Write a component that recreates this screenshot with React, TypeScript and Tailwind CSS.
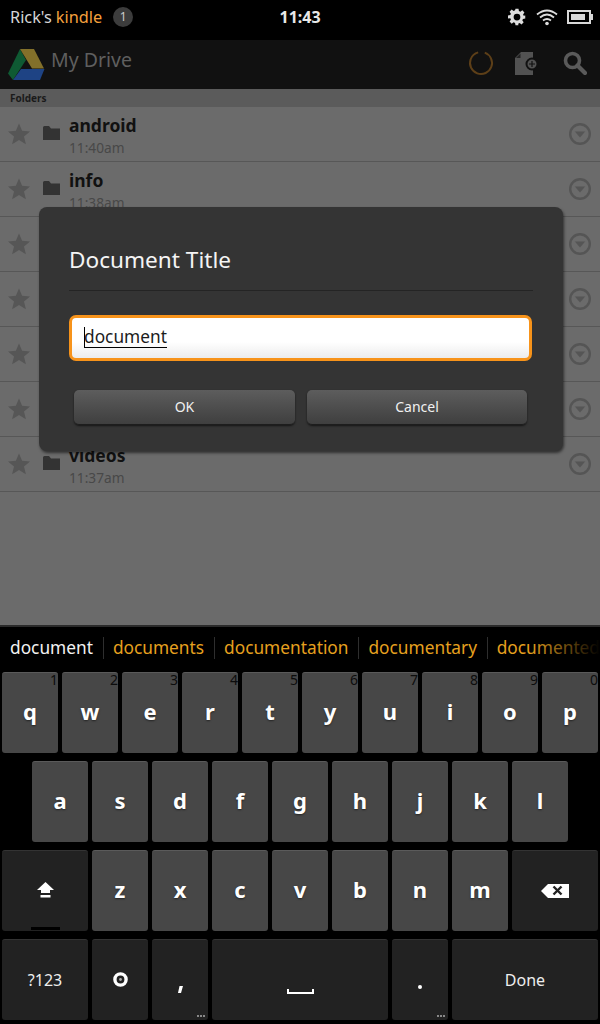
const font = { fontFamily: '"Noto Sans", "Open Sans", sans-serif' };

function Star() {
  return (
    <svg width="24" height="24" viewBox="0 0 24 24" className="shrink-0">
      <path d="M12 1.500l3.100 7.300 7.900.6-6 5.100 1.900 7.700L12 18.100l-6.900 4.100 1.900-7.700-6-5.100 7.900-.6z" fill="#565656" />
    </svg>
  );
}

function Folder() {
  return (
    <svg width="17" height="14" viewBox="0 0 17 14" className="shrink-0">
      <path d="M0 1.500Q0 0 1.500 0H6l2 2.500h9V14H0z" fill="#333333" />
    </svg>
  );
}

function RowArrow() {
  return (
    <svg width="24" height="24" viewBox="0 0 24 24" className="shrink-0">
      <circle cx="12" cy="12" r="9.800" fill="none" stroke="#555555" strokeWidth="2.400" />
      <path d="M6.800 9.500h10.400L12 15.500z" fill="#555555" />
    </svg>
  );
}

function FolderRow({ name, time }: { name?: string; time?: string }) {
  return (
    <div className="flex h-[55px] items-center border-b border-[#575757] pl-[7px] pr-[8px]">
      <Star />
      <div className="mb-[2px] ml-[12px]">
        <Folder />
      </div>
      <div className="ml-[9px] flex-1 pt-[3px]">
        <div className="h-[25px] text-[17.500px] leading-[25px] font-bold text-[#111111]">{name}</div>
        <div className="h-[20px] text-[13.700px] leading-[20px] text-[#484848]">{time}</div>
      </div>
      <RowArrow />
    </div>
  );
}

function StatusBar() {
  return (
    <div className="flex h-[40px] items-center bg-black pb-[6px] pl-[10px] pr-[7px]">
      <span className="text-[16.300px] text-[#d6d6d6]">Rick's</span>
      <span className="ml-[4px] text-[16.300px] text-[#f5a03c]">kindle</span>
      <span className="ml-[11px] flex h-[20px] w-[20px] items-center justify-center rounded-full bg-[#3c3c3c] text-[12px] text-[#cccccc]">1</span>
      <span className="flex-1 pr-[41px] text-center text-[16px] font-bold text-[#e8e8e8]">11:43</span>
      <svg width="18" height="18" viewBox="0 0 24 24" className="mr-[10px]">
        <path
          fillRule="evenodd"
          fill="#dddddd"
          d="M10 1h4l.6 3.100 1.900.8 2.600-1.800 2.800 2.800-1.800 2.600.8 1.900L23 10v4l-3.100.6-.8 1.900 1.800 2.600-2.800 2.800-2.600-1.800-1.900.8L13.900 23H10l-.6-3.100-1.900-.8-2.600 1.800-2.800-2.800 1.800-2.600-.8-1.900L0 14v-4l3.100-.6.800-1.900L2.100 4.900l2.800-2.800 2.600 1.800 1.900-.8zM12 7.500a4.500 4.500 0 1 0 0 9 4.500 4.500 0 0 0 0-9z"
        />
      </svg>
      <svg width="22" height="18" viewBox="0 0 22 18" className="mr-[9px]">
        <g fill="none" stroke="#dddddd" strokeWidth="1.800">
          <path d="M1 6.500Q11-1.500 21 6.500" />
          <path d="M4 9.500Q11 3.500 18 9.500" />
          <path d="M7 12.500Q11 9.500 15 12.500" />
        </g>
        <circle cx="11" cy="15.500" r="1.800" fill="#dddddd" />
      </svg>
      <div className="flex items-center">
        <div className="flex h-[14px] w-[24px] items-center border-2 border-[#d8d8d8] pl-[2px]">
          <div className="h-[6px] w-[14px] bg-[#d8d8d8]" />
        </div>
        <div className="h-[6px] w-[2px] bg-[#d8d8d8]" />
      </div>
    </div>
  );
}

function DriveLogo() {
  return (
    <svg width="38" height="33" viewBox="0 0 38 33">
      <path d="M13 1L1 25.500 6 32 19 12z" fill="#0f5a33" />
      <path d="M13 1h14l10 19.500H25z" fill="#83702a" />
      <path d="M14 21h23.500L33 32H6z" fill="#1e4384" />
    </svg>
  );
}

function AppHeader() {
  return (
    <div className="flex h-[49px] items-center bg-[#111111] pl-[7px] pr-[13px]">
      <DriveLogo />
      <span className="ml-[6px] flex-1 pb-[9px] text-[19.500px] text-[#5f5f5f]">My Drive</span>
      <svg width="26" height="26" viewBox="0 0 26 26" className="mb-[3px] mr-[20px]">
        <circle cx="13" cy="13" r="11" fill="none" stroke="#5d3f18" strokeWidth="2" strokeDasharray="62 7" transform="rotate(-70 13 13)" />
      </svg>
      <svg width="27" height="24" viewBox="0 0 27 24" className="mb-[3px] mr-[22px]">
        <path d="M7 1h12v23H1V7z" fill="#525252" />
        <path d="M6.500 2.500V7H2z" fill="#222222" />
        <circle cx="18" cy="13" r="5.500" fill="#525252" stroke="#111111" strokeWidth="2" />
        <path d="M15 13h6M18 10v6" stroke="#111111" strokeWidth="1.200" />
      </svg>
      <svg width="24" height="24" viewBox="0 0 24 24" className="mb-[3px]">
        <circle cx="9.500" cy="9.500" r="7" fill="none" stroke="#5a5a5a" strokeWidth="3.600" />
        <path d="M14.500 14.500L22 22" stroke="#5a5a5a" strokeWidth="4.200" strokeLinecap="round" />
      </svg>
    </div>
  );
}

function DialogButton({ label, w }: { label: string; w: string }) {
  return (
    <button className={`h-[35px] rounded-[5px] border-b border-[#1d1d1d] bg-gradient-to-b from-[#5d5d5d] to-[#3f3f3f] pb-[2px] text-[14px] text-[#f0f0f0] shadow-[0_1px_2px_rgba(0,0,0,0.6)] ${w}`}>
      {label}
    </button>
  );
}

function TitleDialog() {
  return (
    <div className="absolute left-[39px] top-[207px] h-[244px] w-[524px] rounded-[8px] bg-[#343434] px-[30px] pt-[35px] shadow-[1px_2px_3px_rgba(0,0,0,0.55)]">
      <div className="h-[49px] border-b border-[#242424] text-[22.600px] leading-[36px] text-[#f4f4f4]">Document Title</div>
      <div className="mt-[24px] flex h-[46px] w-[463px] items-center rounded-[7px] border-[3px] border-[#f7931a] bg-gradient-to-b from-white from-60% to-[#ececec] pl-[12px]">
        <span className="mb-[2px] border-b border-black text-[17.300px] leading-[20px] text-[#1c1c1c] shadow-[inset_1px_0_0_#000000]">document</span>
      </div>
      <div className="mt-[29px] flex gap-[12px] pl-[5px]">
        <DialogButton label="OK" w="w-[221px]" />
        <DialogButton label="Cancel" w="w-[220px]" />
      </div>
    </div>
  );
}

function Suggestions() {
  const words = ["documents", "documentation", "documentary"];
  return (
    <div className="relative flex h-[47px] items-center overflow-hidden border-t-2 border-[#2a2a2a] bg-black pb-[4px] pl-[10px] text-[17.300px] whitespace-nowrap">
      <span className="text-[#f2f2f2]">document</span>
      {words.map((w) => (
        <div key={w} className="flex items-center">
          <div className="ml-[10px] mr-[9px] h-[22px] w-px bg-[#2e2e2e]" />
          <span className="text-[#e6a01f]">{w}</span>
        </div>
      ))}
      <div className="ml-[10px] mr-[9px] h-[22px] w-px bg-[#2e2e2e]" />
      <span className="text-[#e6a01f]">documented</span>
      <div className="absolute right-0 top-0 h-full w-[70px] bg-gradient-to-r from-transparent to-black" />
    </div>
  );
}

function Key({ label, digit, dark, w = "w-[56px]", dots, children, thin }: {
  label?: string;
  digit?: string;
  dark?: boolean;
  w?: string;
  dots?: boolean;
  thin?: boolean;
  children?: React.ReactNode;
}) {
  return (
    <div
      className={`relative flex h-[81px] shrink-0 items-center justify-center rounded-[3px] border-t ${w} ${
        dark ? "border-[#333333] bg-[#222222]" : "border-[#5a5a5a] bg-[#474747]"
      }`}
    >
      {digit && <span className="absolute right-0 top-[-2px] text-[14px] leading-[18px] text-[#0c0c0c]">{digit}</span>}
      {label && (
        <span
          className={
            thin
              ? "text-[16px] text-[#eeeeee]"
              : "pb-[3px] text-[22px] font-bold text-white [text-shadow:0_1px_2px_rgba(0,0,0,0.5)]"
          }
        >
          {label}
        </span>
      )}
      {children}
      {dots && <span className="absolute bottom-[3px] right-[3px] h-[2px] w-[8px] bg-[linear-gradient(90deg,#888_2px,transparent_2px)] bg-[length:3px_2px]" />}
    </div>
  );
}

function Keyboard() {
  return (
    <div className="flex flex-1 flex-col gap-[8px] bg-black">
      <div className="flex gap-[4px] pl-[2px]">
        {"qwertyuiop".split("").map((c, i) => (
          <Key key={c} label={c} digit={String((i + 1) % 10)} />
        ))}
      </div>
      <div className="flex gap-[4px] pl-[32px]">
        {"asdfghjkl".split("").map((c) => (
          <Key key={c} label={c} />
        ))}
      </div>
      <div className="flex gap-[4px] pl-[2px]">
        <Key dark w="w-[86px]">
          <svg width="17" height="16" viewBox="0 0 17 16" className="mb-[3px]">
            <path d="M8.500 0L17 8h-4v3H4V8H0z" fill="#ffffff" />
            <rect x="3.500" y="13" width="10" height="2.500" fill="#ffffff" />
          </svg>
          <span className="absolute bottom-[1px] left-[29px] h-[3px] w-[29px] bg-black" />
        </Key>
        {"zxcvbnm".split("").map((c) => (
          <Key key={c} label={c} />
        ))}
        <Key dark w="w-[86px]">
          <svg width="28" height="14" viewBox="0 0 28 14" className="mb-[1px]">
            <path d="M7 0h21v14H7L0 7z" fill="#ffffff" />
            <path d="M12.500 2.500l8 8M20.500 2.500l-8 8" stroke="#222222" strokeWidth="2.400" />
          </svg>
        </Key>
      </div>
      <div className="flex gap-[4px] pl-[2px]">
        <Key dark thin w="w-[86px]" label="?123" />
        <Key dark>
          <svg width="15" height="15" viewBox="0 0 15 15" className="mt-[-1px]">
            <circle cx="7.500" cy="7.500" r="5.600" fill="#222222" stroke="#ffffff" strokeWidth="3.400" />
            <circle cx="7.500" cy="7.500" r="1.400" fill="#aaaaaa" />
          </svg>
        </Key>
        <Key dark dots>
          <svg width="5" height="7" viewBox="0 0 5 7" className="mt-[18px]">
            <path d="M1.500 0H5L3 7H0z" fill="#ffffff" />
          </svg>
        </Key>
        <Key dark w="w-[176px]">
          <svg width="27" height="5" viewBox="0 0 27 5" className="mt-[22px]">
            <path d="M1 0v4h25V0" fill="none" stroke="#ffffff" strokeWidth="2" />
          </svg>
        </Key>
        <Key dark dots>
          <span className="mt-[14px] h-[4px] w-[4px] rounded-full bg-white" />
        </Key>
        <Key dark thin w="w-[146px]" label="Done" />
      </div>
    </div>
  );
}

export default function App() {
  return (
    <div className="relative flex h-[1024px] w-[600px] flex-col overflow-hidden bg-black" style={font}>
      <StatusBar />
      <AppHeader />
      <div className="flex h-[18px] items-center bg-[#5b5b5b] pl-[10px] text-[10px] font-bold text-[#1a1a1a]">Folders</div>
      <div className="h-[518px] bg-[#6b6b6b]">
        <FolderRow name="android" time="11:40am" />
        <FolderRow name="info" time="11:38am" />
        <FolderRow />
        <FolderRow />
        <FolderRow />
        <FolderRow />
        <FolderRow name="videos" time="11:37am" />
      </div>
      <Suggestions />
      <Keyboard />
      <TitleDialog />
    </div>
  );
}
